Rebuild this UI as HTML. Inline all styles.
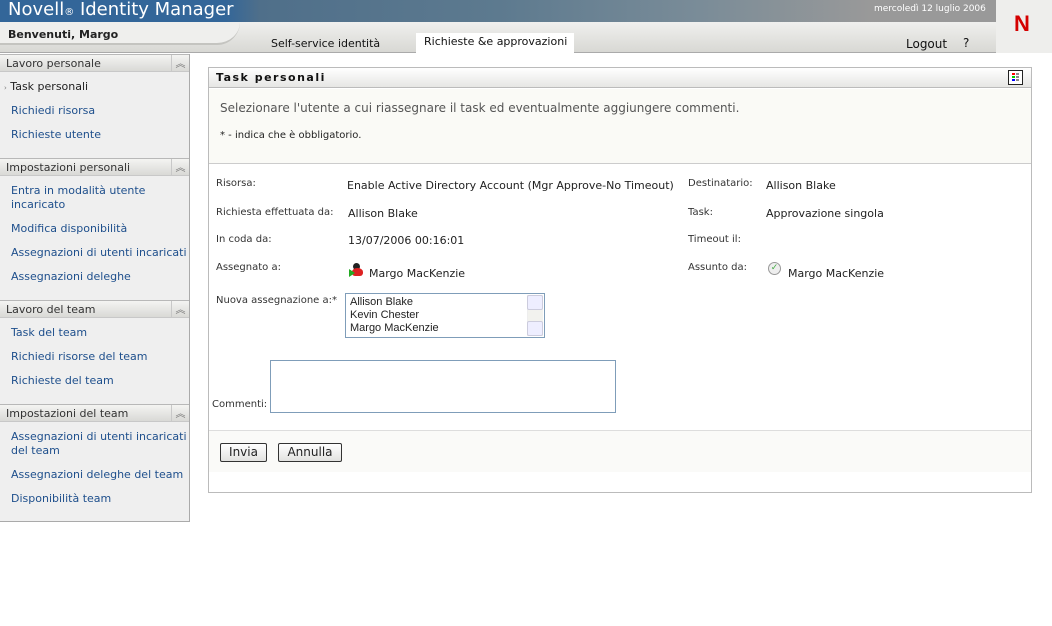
<!DOCTYPE html>
<html><head><meta charset="utf-8"><style>
*{margin:0;padding:0;box-sizing:border-box}
body{width:1052px;height:626px;background:#fff;font-family:"DejaVu Sans","Liberation Sans",sans-serif;font-size:11px;color:#222;position:relative;overflow:hidden}
.a{position:absolute;white-space:nowrap}
.lnk{color:#1e4f8c;font-size:11px}
.sh{position:absolute;left:0;width:189px;height:18px;background:linear-gradient(#f4f4f2,#d9d9d6);border-top:1px solid #b8b8b8;border-bottom:1px solid #c8c8c8;font-size:11px;color:#333;padding:2px 0 0 6px}
.sh i{position:absolute;right:0;top:0;width:18px;height:16px;border-left:1px solid #c8c8c8;font-style:normal;text-align:center;color:#777;font-size:10px}
.lb{font-size:10px;color:#333}
.v{font-size:11px;color:#222}
.btn{position:absolute;height:19px;border:1px solid #333;border-radius:2px;background:linear-gradient(#fff,#e2e2e0);font-size:12px;text-align:center;padding-top:1px}
</style></head><body>
<div class="a" style="left:0;top:0;width:996px;height:22px;background:linear-gradient(90deg,#336699 0,#336699 225px,#4f6f8a 260px,#5d7a8f 500px,#7a8c98 700px,#999 870px,#999 996px)"></div>
<div class="a" style="left:8px;top:-1px;font-size:18px;color:#fff">Novell<span style="font-size:10px">®</span> Identity Manager</div>
<div class="a" style="left:874px;top:4px;font-size:9px;color:#fff">mercoledì 12 luglio 2006</div>
<div class="a" style="left:996px;top:0;width:56px;height:53px;background:#eeeeec"></div>
<div class="a" style="left:1014px;top:11px;font-size:22px;font-weight:bold;color:#d40000;font-family:'Liberation Sans',sans-serif">N</div>
<div class="a" style="left:0;top:22px;width:996px;height:31px;background:linear-gradient(#f0f0ee,#d8d8d4);border-bottom:1px solid #aaa"></div>
<div class="a" style="left:0;top:22px;width:240px;height:23px;background:#efefed;border-bottom:2px solid #c4c4c0;border-radius:0 0 40px 0"></div>
<div class="a" style="left:8px;top:28px;font-size:11px;font-weight:bold;color:#222">Benvenuti, Margo</div>
<div class="a" style="left:271px;top:37px;font-size:11px;color:#111">Self-service identità</div>
<div class="a" style="left:416px;top:33px;width:158px;height:20px;background:#fff"></div>
<div class="a" style="left:424px;top:35px;font-size:11px;color:#111">Richieste &amp;e approvazioni</div>
<div class="a" style="left:906px;top:37px;font-size:12px;color:#111">Logout</div>
<div class="a" style="left:963px;top:36px;font-size:12px;color:#111">?</div>

<div class="a" style="left:0;top:54px;width:190px;height:468px;background:#efefef;border-right:1px solid #aaa;border-bottom:1px solid #aaa"></div>
<div class="sh" style="top:54px">Lavoro personale<i>︽</i></div>
<div class="a" style="left:4px;top:80px;font-size:11px;color:#222"><span style="font-size:7px;color:#777">›</span> Task personali</div>
<div class="a lnk" style="left:11px;top:104px">Richiedi risorsa</div>
<div class="a lnk" style="left:11px;top:128px">Richieste utente</div>
<div class="sh" style="top:158px">Impostazioni personali<i>︽</i></div>
<div class="a lnk" style="left:11px;top:184px;line-height:14px">Entra in modalità utente<br>incaricato</div>
<div class="a lnk" style="left:11px;top:222px">Modifica disponibilità</div>
<div class="a lnk" style="left:11px;top:246px">Assegnazioni di utenti incaricati</div>
<div class="a lnk" style="left:11px;top:270px">Assegnazioni deleghe</div>
<div class="sh" style="top:300px">Lavoro del team<i>︽</i></div>
<div class="a lnk" style="left:11px;top:326px">Task del team</div>
<div class="a lnk" style="left:11px;top:350px">Richiedi risorse del team</div>
<div class="a lnk" style="left:11px;top:374px">Richieste del team</div>
<div class="sh" style="top:404px">Impostazioni del team<i>︽</i></div>
<div class="a lnk" style="left:11px;top:430px;line-height:14px">Assegnazioni di utenti incaricati<br>del team</div>
<div class="a lnk" style="left:11px;top:468px">Assegnazioni deleghe del team</div>
<div class="a lnk" style="left:11px;top:492px">Disponibilità team</div>

<div class="a" style="left:208px;top:67px;width:824px;height:426px;border:1px solid #bbb;background:#fff"></div>
<div class="a" style="left:209px;top:68px;width:822px;height:20px;background:linear-gradient(#fff,#e6e6e4);border-bottom:1px solid #bbb"></div>
<div class="a" style="left:216px;top:71px;font-size:11px;font-weight:bold;letter-spacing:1.5px;color:#111">Task personali</div>
<div class="a" style="left:1008px;top:70px;width:15px;height:15px;border:1px solid #222;background:#fff;font-size:0">
<div class="a" style="left:3px;top:2px;width:3px;height:2px;background:red"></div><div class="a" style="left:3px;top:5px;width:3px;height:2px;background:#0c0"></div><div class="a" style="left:3px;top:8px;width:3px;height:2px;background:#00f"></div>
<div class="a" style="left:7px;top:2px;width:3px;height:2px;background:#888"></div><div class="a" style="left:7px;top:5px;width:3px;height:2px;background:#888"></div><div class="a" style="left:7px;top:8px;width:3px;height:2px;background:#888"></div></div>
<div class="a" style="left:209px;top:89px;width:822px;height:75px;background:#fafaf6;border-bottom:1px solid #ccc"></div>
<div class="a" style="left:220px;top:101px;font-size:12px;color:#555">Selezionare l'utente a cui riassegnare il task ed eventualmente aggiungere commenti.</div>
<div class="a" style="left:220px;top:130px;font-size:10px;color:#222">* - indica che è obbligatorio.</div>

<div class="a lb" style="left:216px;top:178px">Risorsa:</div>
<div class="a v" style="left:347px;top:179px">Enable Active Directory Account (Mgr Approve-No Timeout)</div>
<div class="a lb" style="left:216px;top:207px">Richiesta effettuata da:</div>
<div class="a v" style="left:348px;top:207px">Allison Blake</div>
<div class="a lb" style="left:216px;top:234px">In coda da:</div>
<div class="a v" style="left:348px;top:234px">13/07/2006 00:16:01</div>
<div class="a lb" style="left:216px;top:262px">Assegnato a:</div>
<div class="a" style="left:349px;top:263px;width:14px;height:14px">
<div class="a" style="left:4px;top:0;width:7px;height:7px;border-radius:50%;background:#222"></div>
<div class="a" style="left:3px;top:5px;width:11px;height:8px;border-radius:50% 50% 3px 3px;background:#d22"></div>
<div class="a" style="left:0;top:6px;width:0;height:0;border-left:6px solid #2a2;border-top:4px solid transparent;border-bottom:4px solid transparent"></div></div>
<div class="a v" style="left:369px;top:267px">Margo MacKenzie</div>
<div class="a lb" style="left:216px;top:295px">Nuova assegnazione a:*</div>
<div class="a" style="left:345px;top:293px;width:200px;height:45px;border:1px solid #7f9db9;background:#fff;font-family:'Liberation Sans',sans-serif;font-size:11px;line-height:13px;padding:2px 4px">Allison Blake<br>Kevin Chester<br>Margo MacKenzie</div>
<div class="a" style="left:527px;top:295px;width:16px;height:41px;background:#f2f2ee;border-left:1px solid #eee"></div>
<div class="a" style="left:527px;top:295px;width:16px;height:15px;border:1px solid #ccd;border-radius:2px;background:#eef"></div>
<div class="a" style="left:527px;top:321px;width:16px;height:15px;border:1px solid #ccd;border-radius:2px;background:#eef"></div>

<div class="a lb" style="left:688px;top:178px">Destinatario:</div>
<div class="a v" style="left:766px;top:179px">Allison Blake</div>
<div class="a lb" style="left:688px;top:207px">Task:</div>
<div class="a v" style="left:766px;top:207px">Approvazione singola</div>
<div class="a lb" style="left:688px;top:234px">Timeout il:</div>
<div class="a lb" style="left:688px;top:262px">Assunto da:</div>
<div class="a" style="left:768px;top:262px;width:13px;height:13px;border-radius:50%;border:1px solid #999;background:#eee;color:#4a4;font-size:9px;text-align:center;line-height:11px">✓</div>
<div class="a v" style="left:788px;top:267px">Margo MacKenzie</div>

<div class="a lb" style="left:212px;top:399px">Commenti:</div>
<div class="a" style="left:270px;top:360px;width:346px;height:53px;border:1px solid #7f9db9;background:#fff"></div>

<div class="a" style="left:209px;top:430px;width:822px;height:42px;background:#fafaf8;border-top:1px solid #ddd"></div>
<div class="btn" style="left:220px;top:443px;width:47px">Invia</div>
<div class="btn" style="left:278px;top:443px;width:64px">Annulla</div>
</body></html>
